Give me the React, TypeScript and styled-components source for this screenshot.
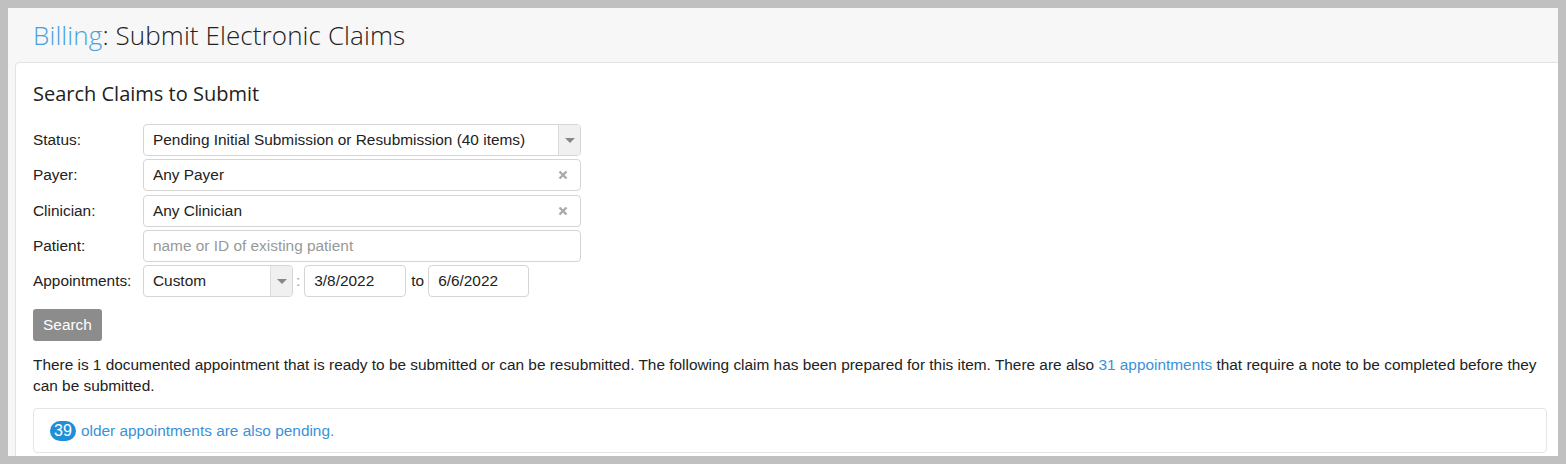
import React from 'react';
import styled, { createGlobalStyle } from 'styled-components';

const GlobalStyle = createGlobalStyle`
  html, body {
    margin: 0;
    padding: 0;
    background: #c0c0c0;
  }
  body {
    padding: 8px;
    height: 464px;
    box-sizing: border-box;
    overflow: hidden;
  }
`;

const Frame = styled.div`
  width: 1550px;
  height: 448px;
  background: #f7f7f7;
  overflow: hidden;
`;

const PageHeader = styled.div`
  height: 54px;
  padding-left: 25px;
  display: flex;
  align-items: center;
  box-sizing: border-box;
  h1 {
    margin: 0;
    font-family: 'Open Sans', sans-serif;
    font-weight: 300;
    font-size: 26px;
    color: #222;
    letter-spacing: 0.1px;
  }
  span {
    color: #4a9fe0;
  }
`;

const Card = styled.div`
  margin-left: 7px;
  width: 1549px;
  height: 420px;
  background: #fff;
  border: 1px solid #e3e3e3;
  border-radius: 4px;
  box-sizing: border-box;
  padding: 17px 16px 0 17px;
  font-family: 'Liberation Sans', Arial, sans-serif;
  font-size: 15.4px;
  color: #222;
`;

const CardTitle = styled.h2`
  margin: 0 0 17px;
  font-family: 'Open Sans', sans-serif;
  font-weight: 400;
  font-size: 20px;
  line-height: 27px;
  color: #222;
`;

const Form = styled.div`
  display: grid;
  grid-template-columns: 110px 438px;
  row-gap: 3.25px;
  align-items: center;
`;

const Label = styled.label`
  color: #222;
`;

const Field = styled.div<{ $width?: number }>`
  position: relative;
  width: ${(p) => (p.$width ? `${p.$width}px` : '100%')};
  height: 32px;
  border: 1px solid #d5d5d5;
  border-radius: 4px;
  box-sizing: border-box;
  display: flex;
  align-items: center;
  padding-left: 9px;
  background: #fff;
  color: #222;
  overflow: hidden;
  flex-shrink: 0;
`;

const Placeholder = styled.span`
  color: #999;
`;

const FieldText = styled.span`
  flex: 1;
  white-space: nowrap;
`;

const Caret = styled.div`
  width: 21px;
  height: 100%;
  background: #f0f0f0;
  border-left: 1px solid #ddd;
  display: flex;
  align-items: center;
  justify-content: center;
  &::after {
    content: '';
    border-left: 5px solid transparent;
    border-right: 5px solid transparent;
    border-top: 5px solid #888;
  }
`;

const Clear = styled.div`
  width: 22px;
  display: flex;
  align-items: center;
  justify-content: center;
  padding-right: 6px;
`;

const DateRow = styled.div`
  display: flex;
  align-items: center;
`;

const Sep = styled.span<{ $muted?: boolean }>`
  color: ${(p) => (p.$muted ? '#999' : '#222')};
  padding: 0 4px 0 ${(p) => (p.$muted ? 3 : 5)}px;
`;

const SearchButton = styled.button`
  margin-top: 12px;
  width: 69px;
  height: 32px;
  background: #8c8c8c;
  border: none;
  border-radius: 3px;
  color: #fff;
  font-family: 'Liberation Sans', Arial, sans-serif;
  font-size: 15.4px;
  padding: 0;
`;

const Message = styled.p`
  margin: 13px 0 12px;
  line-height: 21px;
  color: #222;
  padding-right: 8px;
`;

const Link = styled.a`
  color: #3a92d8;
  text-decoration: none;
`;

const Panel = styled.div`
  width: 1514px;
  height: 45px;
  border: 1px solid #e5e5e5;
  border-radius: 4px;
  box-sizing: border-box;
  display: flex;
  align-items: center;
  padding-left: 16px;
`;

const Badge = styled.span`
  display: inline-flex;
  align-items: center;
  justify-content: center;
  height: 20px;
  min-width: 26px;
  padding: 0 3px;
  box-sizing: border-box;
  border-radius: 10px;
  background: #1f8fd8;
  color: #fff;
  font-size: 16px;
  margin-right: 5px;
`;

const ClearIcon = () => (
  <svg width="10" height="10" viewBox="0 0 10 10">
    <path d="M1.5 1.5 L8.5 8.5 M8.5 1.5 L1.5 8.5" stroke="#aaa" strokeWidth="2.4" strokeLinecap="butt" />
  </svg>
);

export default function App() {
  return (
    <>
      <GlobalStyle />
      <Frame>
        <PageHeader>
          <h1>
            <span>Billing</span>: Submit Electronic Claims
          </h1>
        </PageHeader>
        <Card>
          <CardTitle>Search Claims to Submit</CardTitle>
          <Form>
            <Label>Status:</Label>
            <Field>
              <FieldText>Pending Initial Submission or Resubmission (40 items)</FieldText>
              <Caret />
            </Field>
            <Label>Payer:</Label>
            <Field>
              <FieldText>Any Payer</FieldText>
              <Clear>
                <ClearIcon />
              </Clear>
            </Field>
            <Label>Clinician:</Label>
            <Field>
              <FieldText>Any Clinician</FieldText>
              <Clear>
                <ClearIcon />
              </Clear>
            </Field>
            <Label>Patient:</Label>
            <Field>
              <Placeholder>name or ID of existing patient</Placeholder>
            </Field>
            <Label>Appointments:</Label>
            <DateRow>
              <Field $width={150}>
                <FieldText>Custom</FieldText>
                <Caret />
              </Field>
              <Sep $muted>:</Sep>
              <Field $width={102}>3/8/2022</Field>
              <Sep>to</Sep>
              <Field $width={101}>6/6/2022</Field>
            </DateRow>
          </Form>
          <SearchButton>Search</SearchButton>
          <Message>
            There is 1 documented appointment that is ready to be submitted or can be resubmitted. The following claim
            has been prepared for this item. There are also <Link>31 appointments</Link> that require a note to be
            completed before they can be submitted.
          </Message>
          <Panel>
            <Badge>39</Badge>
            <Link>older appointments are also pending.</Link>
          </Panel>
        </Card>
      </Frame>
    </>
  );
}
